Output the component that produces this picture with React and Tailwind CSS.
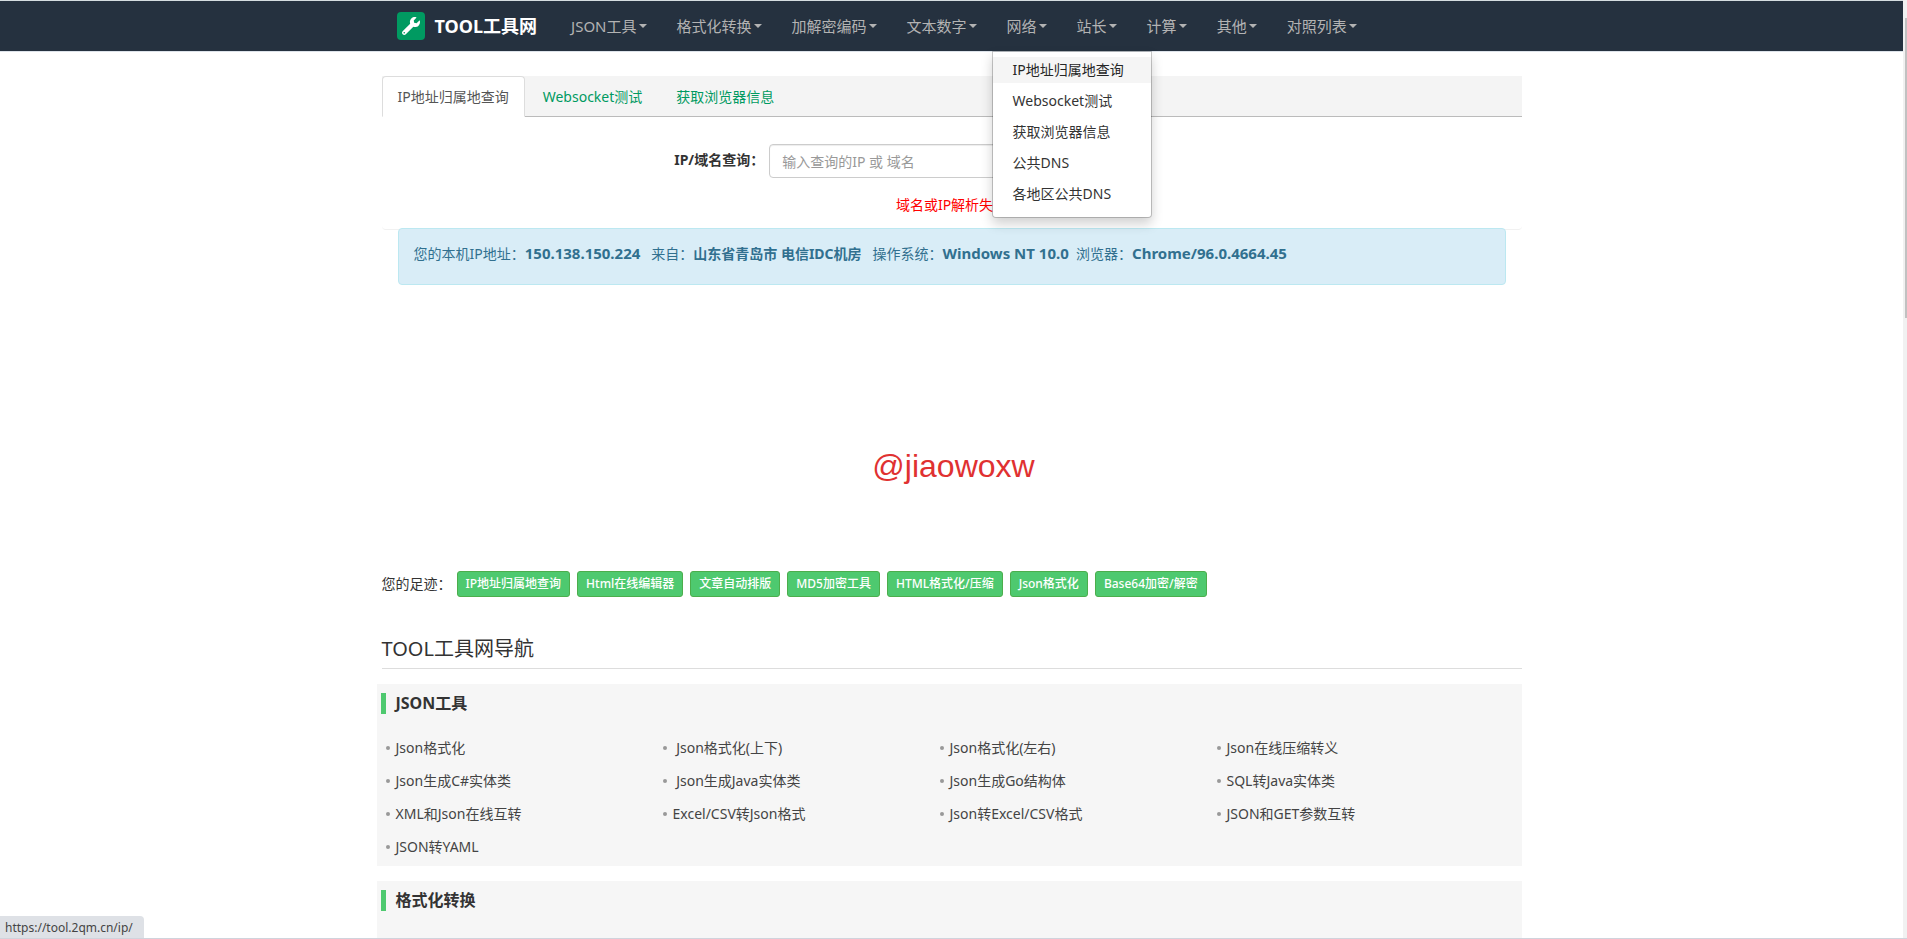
import { useState } from 'react';
import { FaWrench } from 'react-icons/fa';

const MENUS = ['JSON工具', '格式化转换', '加解密编码', '文本数字', '网络', '站长', '计算', '其他', '对照列表'];

const NETWORK_ITEMS = ['IP地址归属地查询', 'Websocket测试', '获取浏览器信息', '公共DNS', '各地区公共DNS'];

const TABS = ['IP地址归属地查询', 'Websocket测试', '获取浏览器信息'];

const HISTORY = [
  'IP地址归属地查询',
  'Html在线编辑器',
  '文章自动排版',
  'MD5加密工具',
  'HTML格式化/压缩',
  'Json格式化',
  'Base64加密/解密',
];

const GROUPS = [
  {
    title: 'JSON工具',
    links: [
      'Json格式化',
      '\u00a0Json格式化(上下)',
      'Json格式化(左右)',
      'Json在线压缩转义',
      'Json生成C#实体类',
      '\u00a0Json生成Java实体类',
      'Json生成Go结构体',
      'SQL转Java实体类',
      'XML和Json在线互转',
      'Excel/CSV转Json格式',
      'Json转Excel/CSV格式',
      'JSON和GET参数互转',
      'JSON转YAML',
    ],
  },
  { title: '格式化转换', links: [] },
];

function Navbar() {
  const [open, setOpen] = useState('网络');

  return (
    <header className="border-t border-b border-t-[#d5dde0] border-b-[#dde3ea] bg-[#25313f]">
      <nav className="mx-auto flex h-[50px] max-w-[1170px] px-[15px]">
        <a href="#" className="flex items-center gap-[10px] px-[15px] text-[18px] font-bold text-white">
          <span className="flex size-7 items-center justify-center rounded bg-[#009a61]">
            <FaWrench className="size-[18px]" />
          </span>
          TOOL工具网
        </a>
        <ul className="ml-1 flex">
          {MENUS.map((name) => (
            <li key={name} className="relative">
              <button
                type="button"
                aria-expanded={open === name}
                onClick={() => setOpen(open === name ? '' : name)}
                className="flex h-full cursor-pointer items-center gap-0.5 px-[15px] text-[15px] text-[#b3b3b3]"
              >
                {name}
                <span className="border-x-4 border-t-4 border-x-transparent border-t-current" />
              </button>
              {name === '网络' && open === name && (
                <ul className="absolute top-full left-0 z-10 w-40 rounded-b border border-black/20 bg-white bg-clip-padding pt-[5px] pb-[5px] shadow-[0_6px_12px_rgba(0,0,0,0.18)]">
                  {NETWORK_ITEMS.map((item, i) => (
                    <li key={item} className="mb-[5px]">
                      <a
                        href="#"
                        className={`block py-[3px] pl-5 whitespace-nowrap hover:bg-[#f5f5f5] ${i === 0 ? 'bg-[#f5f5f5] text-[#262626]' : 'text-[#333]'}`}
                      >
                        {item}
                      </a>
                    </li>
                  ))}
                </ul>
              )}
            </li>
          ))}
        </ul>
      </nav>
    </header>
  );
}

function IpQuery() {
  const [tab, setTab] = useState(TABS[0]);
  const [keyword, setKeyword] = useState('');

  return (
    <section className="mt-6">
      <div className="flex border-b border-[#bbb] bg-[#f4f4f4]">
        {TABS.map((name) => (
          <button
            key={name}
            type="button"
            onClick={() => setTab(name)}
            className={
              tab === name
                ? '-mb-px mr-0.5 cursor-pointer rounded-t border border-[#ddd] border-b-white bg-white px-[15px] pt-[9px] pb-2 text-[#555]'
                : 'mr-0.5 cursor-pointer border border-transparent px-[15px] pt-[10px] pb-2 text-[#009a61]'
            }
          >
            {name}
          </button>
        ))}
      </div>
      <div className="rounded-b border-b border-[#f1f1f1] pt-[27px] pb-[14px]">
        <form className="flex pl-1" onSubmit={(e) => e.preventDefault()}>
          <label htmlFor="ip" className="w-1/3 pt-[6px] text-right font-bold">
            IP/域名查询：
          </label>
          <input
            id="ip"
            type="text"
            value={keyword}
            onChange={(e) => setKeyword(e.target.value)}
            placeholder="输入查询的IP 或 域名"
            className="ml-[5px] h-[34px] w-[350px] rounded border border-[#ccc] px-3 shadow-[inset_0_1px_1px_rgba(0,0,0,0.075)] placeholder:text-[#999]"
          />
        </form>
        <p className="mt-[17px] text-center text-[#f00]">域名或IP解析失败</p>
      </div>
      <div className="mx-4 -mt-0.5 rounded border border-[#bce8f1] bg-[#d9edf7] px-[15px] pt-[14px] pb-5 text-[#31708f]">
        您的本机IP地址：<b className="text-[15px]">150.138.150.224</b>
        &nbsp;&nbsp; 来自：<b>山东省青岛市 电信IDC机房</b>
        &nbsp;&nbsp; 操作系统：<b className="text-[15px]">Windows NT 10.0</b>
        &nbsp; 浏览器：<b className="text-[15px]">Chrome/96.0.4664.45</b>
      </div>
    </section>
  );
}

function ToolGroup({ title, links }) {
  return (
    <section className="mb-[15px] -ml-[5px] bg-[#f6f6f6] px-1 pt-[9px] pb-[3px]">
      <h3 className="flex items-center gap-[10px] text-[16px] leading-[21px] font-bold">
        <span className="h-[21px] w-[5px] bg-[#4ec96f]" />
        {title}
      </h3>
      <ul className="mt-[17px] mr-6 ml-[5px] grid min-h-[33px] grid-cols-4">
        {links.map((link) => (
          <li key={link} className="flex h-[33px] items-center gap-[6px]">
            <span className="size-1 rounded-full bg-[#999]" />
            <a href="#" className="text-[#444] hover:text-[#009a61]">
              {link}
            </a>
          </li>
        ))}
      </ul>
    </section>
  );
}

export default function App() {
  return (
    <div className="relative flex h-screen overflow-hidden bg-white font-['Noto_Sans','Noto_Sans_CJK_SC',sans-serif] text-[14px] leading-5 text-[#333]">
      <div className="flex-1 overflow-y-auto [scrollbar-width:none]">
        <Navbar />
        <main className="mx-auto max-w-[1170px] px-[15px]">
          <IpQuery />
          <div className="flex h-[286px] items-center justify-center pt-[76px] pl-1 font-['Liberation_Sans',sans-serif] text-[32px] text-[#e03131]">
            @jiaowoxw
          </div>
          <div className="flex items-center gap-[5px]">
            <span>您的足迹：</span>
            <div className="flex gap-[7px]">
              {HISTORY.map((name) => (
                <a
                  key={name}
                  href="#"
                  className="rounded-[3px] border border-[#4cae4c] bg-[#4ec96f] px-2 py-[3px] text-[12px] leading-[18px] font-medium text-white"
                >
                  {name}
                </a>
              ))}
            </div>
          </div>
          <h2 className="mt-[39px] mb-[15px] border-b border-[#ddd] pb-[7px] text-[20px] leading-[25px]">TOOL工具网导航</h2>
          {GROUPS.map((group) => (
            <ToolGroup key={group.title} title={group.title} links={group.links} />
          ))}
        </main>
      </div>
      <div className="w-1 bg-[#f1f1f1] pt-[18px]">
        <div className="ml-auto h-[300px] w-0.5 bg-[#c1c1c1]" />
      </div>
      <div className="absolute inset-x-0 bottom-0 border-b border-[#d0d3dc]">
        <div className="w-36 rounded-tr bg-[#dee1e6] px-[5px] pt-0.5 text-[12px] text-[#444]">https://tool.2qm.cn/ip/</div>
      </div>
    </div>
  );
}
